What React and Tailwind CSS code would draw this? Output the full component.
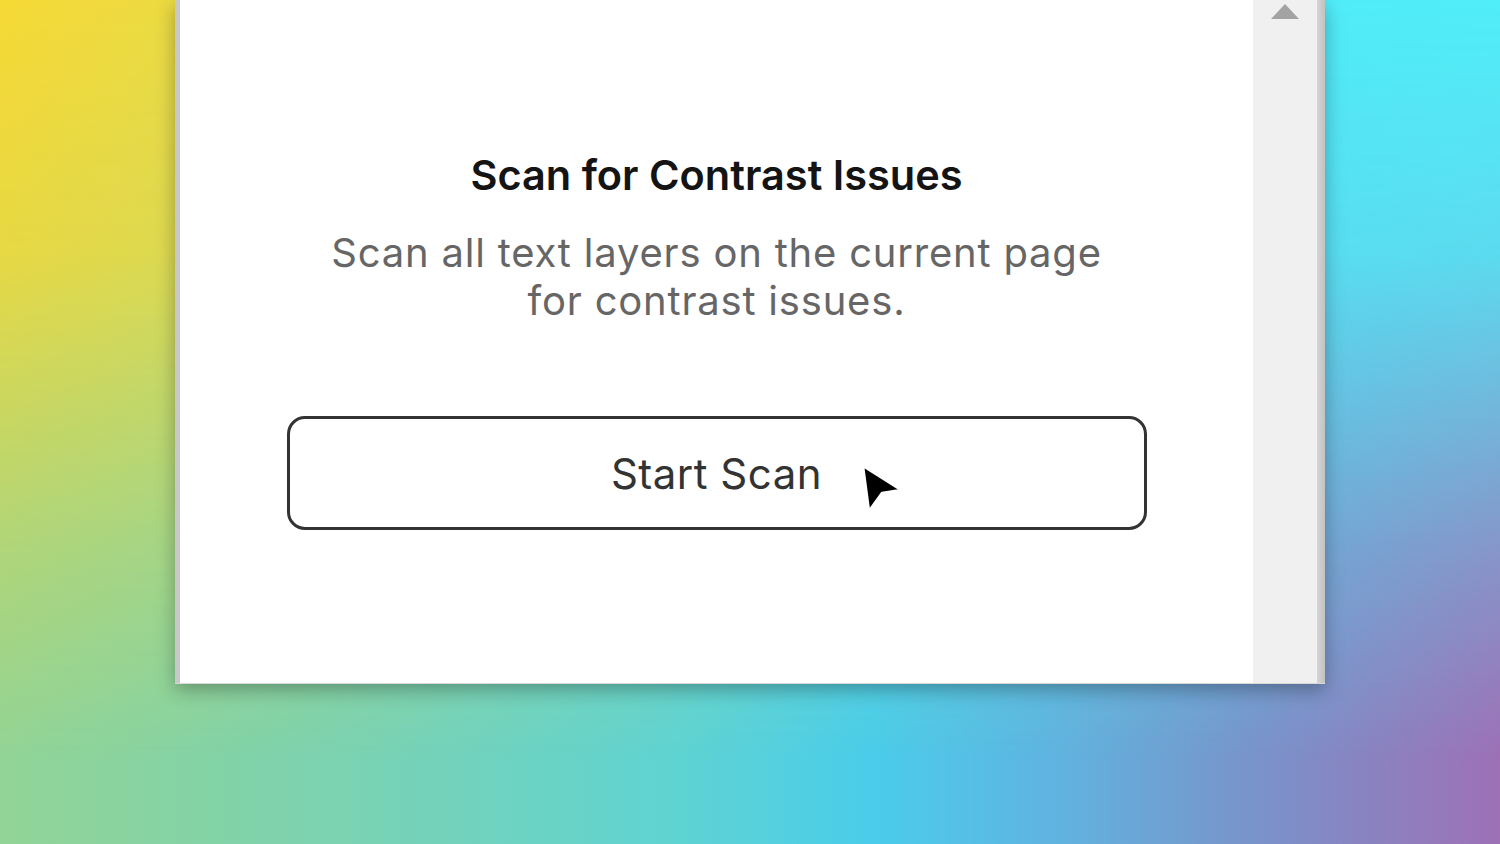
import React from 'react';

const Cursor = () => (
  <svg width="44" height="50" viewBox="0 0 44 50" className="absolute left-[573px] top-[48px]">
    <path
      d="M3 2 L41 26 L22 29 L9 47 Z"
      fill="#000"
      stroke="#fff"
      strokeWidth="2.5"
      strokeLinejoin="round"
    />
  </svg>
);

const App = () => (
  <div className="relative w-[1500px] h-[844px] overflow-hidden bg-[linear-gradient(to_right,#92d496_0%,#78d2b4_25%,#5fd3d2_45%,#4acdea_58%,#5fb4e0_70%,#7c90c8_85%,#9e70b6_100%)] font-['Inter','Noto_Sans',sans-serif]">
    <div className="absolute inset-0 bg-[linear-gradient(to_right,#f6d935_0%,#e4db4c_20%,#a6e2a0_50%,#50ecf8_85%,#50eef8_100%)] [mask-image:linear-gradient(to_bottom,black_0%,rgba(0,0,0,0.85)_30%,rgba(0,0,0,0.3)_65%,transparent_90%)]" />

    {/* Plugin window */}
    <div className="relative ml-[175px] w-[1150px] h-[684px] flex shadow-[0_6px_18px_rgba(0,0,0,0.3)] border-b border-[#d8d8d8]">
      <div className="w-[5px] bg-[#c8c8c8]" />

      <div className="flex-1 bg-white flex flex-col items-center">
        <h1 className="mt-[151px] text-[41.5px] leading-[48px] font-semibold text-[#141414]">
          Scan for Contrast Issues
        </h1>
        <p className="mt-[30px] text-center text-[40px] leading-[48px] text-[#666666] tracking-[0.8px]">
          Scan all text layers on the current page
          <br />
          for contrast issues.
        </p>

        <div className="relative mt-[91px] w-[860px]">
          <button className="w-full h-[114px] border-[3px] border-[#333333] rounded-[18px] text-[42px] text-[#333333] tracking-[0.5px]">
            Start Scan
          </button>
          <Cursor />
        </div>
      </div>

      {/* Scrollbar */}
      <div className="w-[64px] bg-[#f0f0f0] flex justify-center pt-[4px]">
        <div className="w-0 h-0 border-l-[14px] border-r-[14px] border-b-[15px] border-l-transparent border-r-transparent border-b-[#a3a3a3]" />
      </div>
      <div className="w-[8px] bg-[linear-gradient(to_right,#d4d4d4,#c2c2c2)]" />
    </div>
  </div>
);

export default App;
